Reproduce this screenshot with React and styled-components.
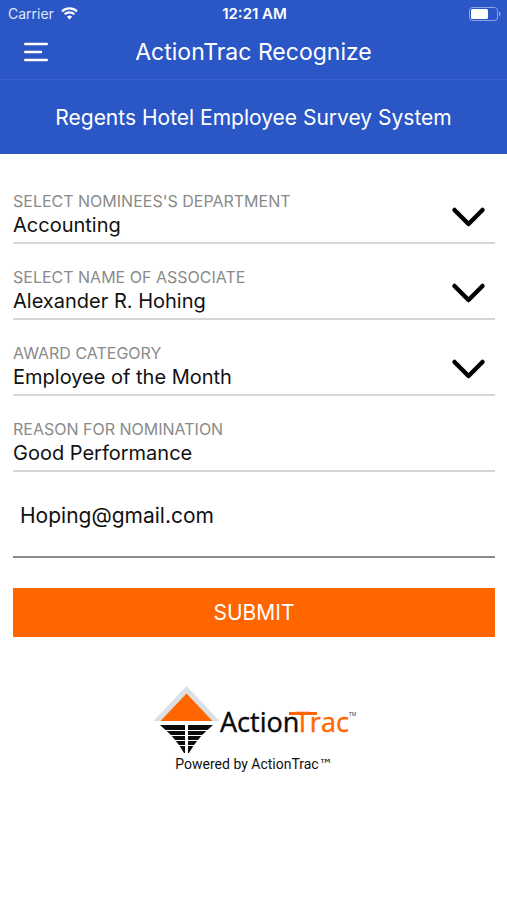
import React, { useState } from "react";
import styled, { createGlobalStyle } from "styled-components";

const departments = ["Accounting", "Front Desk", "Housekeeping"];
const associates = ["Alexander R. Hohing"];
const awards = ["Employee of the Month", "Employee of the Year"];

const SelectField = ({ id, label, value, options, onChange }) => (
  <Field>
    <FieldLabel htmlFor={id}>{label}</FieldLabel>
    <FieldSelect id={id} value={value} onChange={onChange}>
      {options.map((option) => (
        <option key={option}>{option}</option>
      ))}
    </FieldSelect>
    <Chevron viewBox="0 0 34 20" aria-hidden="true">
      <path d="M3.500 3 17.500 17 31.500 3" />
    </Chevron>
  </Field>
);

const WifiIcon = () => (
  <svg width="17" height="13" viewBox="0 0 17 13" fill="none" stroke="#fff" strokeWidth="2.2" aria-hidden="true">
    <path d="M1 4.4a11 11 0 0 1 15 0" />
    <path d="M3.6 7.3a7.2 7.2 0 0 1 9.8 0" />
    <path d="M8.5 12.4 5.9 9.7a3.8 3.8 0 0 1 5.2 0z" fill="#fff" stroke="none" />
  </svg>
);

const BatteryIcon = () => (
  <svg width="32" height="14" viewBox="0 0 32 14" fill="none" aria-hidden="true">
    <rect x="0.5" y="0.5" width="28" height="13" rx="3" stroke="#8ea6e6" />
    <rect x="2" y="2" width="17" height="10" rx="1.5" fill="#fff" />
    <path d="M30 4.6c2 .8 2 4 0 4.8z" fill="#8ea6e6" />
  </svg>
);

const ActionTracLogo = () => (
  <svg width="206" height="70" viewBox="0 0 206 70" role="img" aria-label="ActionTrac">
    <path d="M35.500 0 2.500 35h66z" fill="#dcdfe3" />
    <path d="M35.500 7.500 9.500 35h52z" fill="#ff6600" />
    <path d="M9 39h53L51 49l-8 10-5 8h-5l-5-8-8-10z" fill="#0b0b0b" />
    <path
      d="M34 38h3v30h-3zM12 44h48v1H12zM16 49h40v1H16zM20 54h32v1H20zM24 59h24v1H24z"
      fill="#fff"
    />
    <g fontFamily='"Open Sans", sans-serif' fontSize="27" strokeWidth="0.4">
      <text x="69" y="46" fill="#0b0b0b" stroke="#0b0b0b">Action</text>
      <text x="144" y="46" fill="#ff6600" stroke="#ff6600">Trac</text>
    </g>
    <path d="M138 26h28v3h-28z" fill="#ff6600" />
    <text x="198" y="30" fontFamily='"Open Sans", sans-serif' fontSize="5" fill="#333">TM</text>
  </svg>
);

const App = () => {
  const [department, setDepartment] = useState(departments[0]);
  const [associate, setAssociate] = useState(associates[0]);
  const [award, setAward] = useState(awards[0]);
  const [reason, setReason] = useState("Good Performance");
  const [email, setEmail] = useState("Hoping@gmail.com");

  const handleSubmit = (e) => {
    e.preventDefault();
  };

  return (
    <>
      <GlobalStyle />
      <Header>
        <StatusBar>
          <Carrier>
            Carrier <WifiIcon />
          </Carrier>
          <Clock>12:21 AM</Clock>
          <BatteryIcon />
        </StatusBar>
        <NavBar>
          <MenuButton type="button" aria-label="Menu">
            <svg width="24" height="20" viewBox="0 0 24 20" stroke="#fff" strokeWidth="2.400" strokeLinecap="round">
              <path d="M1.200 2h21.600M1.200 10h15.800M1.200 18h21.600" />
            </svg>
          </MenuButton>
          <Title>ActionTrac Recognize</Title>
        </NavBar>
        <Banner>Regents Hotel Employee Survey System</Banner>
      </Header>

      <Main>
        <Form onSubmit={handleSubmit}>
          <SelectField
            id="department"
            label="SELECT NOMINEES'S DEPARTMENT"
            value={department}
            options={departments}
            onChange={(e) => setDepartment(e.target.value)}
          />
          <SelectField
            id="associate"
            label="SELECT NAME OF ASSOCIATE"
            value={associate}
            options={associates}
            onChange={(e) => setAssociate(e.target.value)}
          />
          <SelectField
            id="award"
            label="AWARD CATEGORY"
            value={award}
            options={awards}
            onChange={(e) => setAward(e.target.value)}
          />
          <Field>
            <FieldLabel htmlFor="reason">REASON FOR NOMINATION</FieldLabel>
            <FieldInput id="reason" value={reason} onChange={(e) => setReason(e.target.value)} />
          </Field>
          <EmailInput
            type="email"
            aria-label="Email"
            value={email}
            onChange={(e) => setEmail(e.target.value)}
          />
          <SubmitButton type="submit">SUBMIT</SubmitButton>
        </Form>
        <Footer>
          <ActionTracLogo />
          <PoweredBy>
            Powered by ActionTrac<TradeMark>™</TradeMark>
          </PoweredBy>
        </Footer>
      </Main>
    </>
  );
};

const GlobalStyle = createGlobalStyle`
  * {
    box-sizing: border-box;
  }

  body {
    margin: 0;
    background: #fff;
    color: #111;
    font-family: Inter, "Liberation Sans", sans-serif;
  }

  input, select, button {
    margin: 0;
    padding: 0;
    border: 0;
    border-radius: 0;
    background: none;
    color: inherit;
    font: inherit;
  }
`;

const Header = styled.header`
  background: #2a56c6;
  color: #fff;
`;

const StatusBar = styled.div`
  display: grid;
  grid-template-columns: 1fr auto 1fr;
  align-items: center;
  height: 27px;
  padding: 0 6px 0 8px;
  font-size: 14px;

  > :last-child {
    justify-self: end;
  }
`;

const Carrier = styled.span`
  display: flex;
  align-items: center;
  gap: 7px;
  color: #dfe7fb;
`;

const Clock = styled.span`
  font-size: 15px;
  font-weight: 600;
`;

const NavBar = styled.div`
  display: grid;
  grid-template-columns: 48px 1fr 48px;
  align-items: center;
  height: 53px;
  padding: 0 12px 3px;
  border-bottom: 1px solid #365fcc;
`;

const MenuButton = styled.button`
  display: flex;
  justify-content: center;
  align-items: center;
  height: 44px;
`;

const Title = styled.h1`
  margin: 0;
  font-size: 23px;
  font-weight: 400;
  line-height: 32px;
  text-align: center;
`;

const Banner = styled.p`
  margin: 0;
  padding: 24px 12px 22px;
  font-size: 21px;
  line-height: 28px;
  text-align: center;
`;

const Main = styled.main`
  padding: 37px 12px 24px 13px;
`;

const Form = styled.form`
  display: flex;
  flex-direction: column;
`;

const Field = styled.div`
  display: grid;
  grid-template-columns: 1fr 44px;
  grid-template-rows: 20px 28px;
  margin-bottom: 23px;
  padding-bottom: 3px;
  border-bottom: 2px solid #d6d6d6;
`;

const FieldLabel = styled.label`
  grid-area: 1 / 1;
  color: #8a8a8a;
  font-size: 16px;
  line-height: 20px;
`;

const FieldSelect = styled.select`
  grid-area: 2 / 1 / 3 / 3;
  appearance: none;
  font-size: 20px;
  line-height: 28px;
`;

const FieldInput = styled.input`
  grid-area: 2 / 1 / 3 / 3;
  font-size: 20px;
  line-height: 28px;
`;

const Chevron = styled.svg`
  grid-area: 1 / 2 / 3 / 3;
  align-self: end;
  width: 34px;
  height: 20px;
  margin-bottom: 12px;
  overflow: visible;
  fill: none;
  stroke: #000;
  stroke-width: 4.500;
  stroke-linecap: round;
  stroke-linejoin: round;
  pointer-events: none;
`;

const EmailInput = styled.input`
  height: 63px;
  padding: 0 7px 20px;
  border-bottom: 2px solid #8a8a8a;
  font-size: 21px;
`;

const SubmitButton = styled.button`
  height: 49px;
  margin-top: 30px;
  background: #ff6600;
  color: #fff;
  font-size: 21px;
`;

const Footer = styled.footer`
  display: flex;
  flex-direction: column;
  align-items: center;
  margin-top: 49px;
`;

const PoweredBy = styled.p`
  margin: 0;
  font-family: Roboto, sans-serif;
  font-size: 14px;
  line-height: 16px;
`;

const TradeMark = styled.span`
  font-family: "DejaVu Sans", sans-serif;
`;

export default App;
